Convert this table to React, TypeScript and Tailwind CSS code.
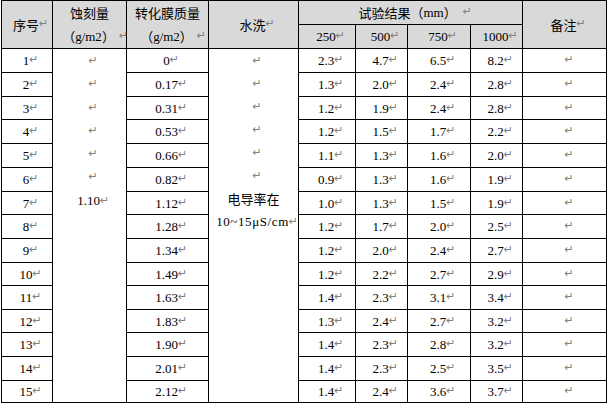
import React from "react";

const rows: string[][] = [
  ["1", "0", "2.3", "4.7", "6.5", "8.2"],
  ["2", "0.17", "1.3", "2.0", "2.4", "2.8"],
  ["3", "0.31", "1.2", "1.9", "2.4", "2.8"],
  ["4", "0.53", "1.2", "1.5", "1.7", "2.2"],
  ["5", "0.66", "1.1", "1.3", "1.6", "2.0"],
  ["6", "0.82", "0.9", "1.3", "1.6", "1.9"],
  ["7", "1.12", "1.0", "1.3", "1.5", "1.9"],
  ["8", "1.28", "1.2", "1.7", "2.0", "2.5"],
  ["9", "1.34", "1.2", "2.0", "2.4", "2.7"],
  ["10", "1.49", "1.2", "2.2", "2.7", "2.9"],
  ["11", "1.63", "1.4", "2.3", "3.1", "3.4"],
  ["12", "1.83", "1.3", "2.4", "2.7", "3.2"],
  ["13", "1.90", "1.4", "2.3", "2.8", "3.2"],
  ["14", "2.01", "1.4", "2.3", "2.5", "3.5"],
  ["15", "2.12", "1.4", "2.4", "3.6", "3.7"],
];

const Ret = () => (
  <span className="inline-block w-[8px] text-left text-[11px] leading-none text-[#808080] font-['DejaVu_Sans',sans-serif] relative -top-[1px]">
    ↵
  </span>
);

const serif = "font-['Liberation_Serif','Noto_Sans_CJK_SC',serif]";
const cjk = "font-['Noto_Sans_CJK_SC',sans-serif]";

const LP = () => (
  <span className={`inline-block w-[13px] text-right ${cjk}`}>（</span>
);
const RP = () => (
  <span className={`inline-block w-[13px] text-left ${cjk}`}>）</span>
);

const Num = ({ v }: { v: string }) => (
  <div className={`bg-white flex items-center justify-center pl-[6px] text-[13px] leading-none text-black whitespace-nowrap ${serif}`}>
    <span>{v}</span>
    <Ret />
  </div>
);

const Note = () => (
  <div className="bg-white flex items-center justify-center pl-[8px]">
    <Ret />
  </div>
);

export default function App() {
  return (
    <div className="bg-white w-[608px] h-[405px]">
      <div className="ml-px w-[606px] grid grid-cols-[50px_73px_81px_89px_56px_51px_62px_51px_83px] grid-rows-[23px_23px_23px_23px_22px_23px_23px_23px_22px_23px_23px_22px_23px_22px_23px_23px_21px] gap-px p-px bg-black text-black">
        {/* header */}
        <div className={`row-span-2 bg-[#d9d9d9] flex items-center justify-center pl-[6px] text-[13px] ${cjk}`}>
          <span>序号</span>
          <Ret />
        </div>
        <div className={`row-span-2 bg-[#d9d9d9] flex flex-col items-center justify-center text-[13px] leading-[24px] ${cjk}`}>
          <span>蚀刻量</span>
          <span className="whitespace-nowrap pl-[10px] flex items-center">
            <LP />
            <span className={serif}>g/m2</span>
            <RP />
            <span className="w-[4px]" />
            <Ret />
          </span>
        </div>
        <div className={`row-span-2 bg-[#d9d9d9] flex flex-col items-center justify-center text-[13px] leading-[24px] ${cjk}`}>
          <span>转化膜质量</span>
          <span className="whitespace-nowrap pl-[10px] flex items-center">
            <LP />
            <span className={serif}>g/m2</span>
            <RP />
            <span className="w-[4px]" />
            <Ret />
          </span>
        </div>
        <div className={`row-span-2 bg-[#d9d9d9] flex items-center justify-center pl-[6px] text-[13px] ${cjk}`}>
          <span>水洗</span>
          <Ret />
        </div>
        <div className={`col-span-4 bg-[#d9d9d9] flex items-center justify-center pl-[8px] text-[13px] whitespace-nowrap ${cjk}`}>
          <span>试验结果</span>
          <LP />
          <span className={serif}>mm</span>
          <RP />
          <span className="w-[6px]" />
          <Ret />
        </div>
        <div className={`row-span-2 bg-[#d9d9d9] flex items-center justify-center pl-[6px] text-[13px] ${cjk}`}>
          <span>备注</span>
          <Ret />
        </div>
        {["250", "500", "750", "1000"].map((h) => (
          <div key={h} className={`bg-[#d9d9d9] flex items-center justify-center pl-[6px] text-[13px] leading-none ${serif}`}>
            <span>{h}</span>
            <Ret />
          </div>
        ))}

        {/* data */}
        {rows.map((r, i) => (
          <React.Fragment key={r[0]}>
            <Num v={r[0]} />
            {i === 0 && (
              <div className={`row-span-15 bg-white flex flex-col items-center pl-[6px] text-[13px] leading-[23.3px] ${serif}`}>
                <span><Ret /></span>
                <span><Ret /></span>
                <span><Ret /></span>
                <span><Ret /></span>
                <span><Ret /></span>
                <span><Ret /></span>
                <span className="whitespace-nowrap">1.10<Ret /></span>
              </div>
            )}
            <Num v={r[1]} />
            {i === 0 && (
              <div className={`row-span-15 bg-white flex flex-col items-center pl-[6px] text-[13px] leading-[23px] ${serif}`}>
                <span><Ret /></span>
                <span><Ret /></span>
                <span><Ret /></span>
                <span><Ret /></span>
                <span><Ret /></span>
                <span><Ret /></span>
                <span className={`${cjk} -ml-[6px]`}>电导率在</span>
                <span className="whitespace-nowrap tracking-[0.6px]">10~15μS/cm<Ret /></span>
              </div>
            )}
            <Num v={r[2]} />
            <Num v={r[3]} />
            <Num v={r[4]} />
            <Num v={r[5]} />
            <Note />
          </React.Fragment>
        ))}
      </div>
    </div>
  );
}
